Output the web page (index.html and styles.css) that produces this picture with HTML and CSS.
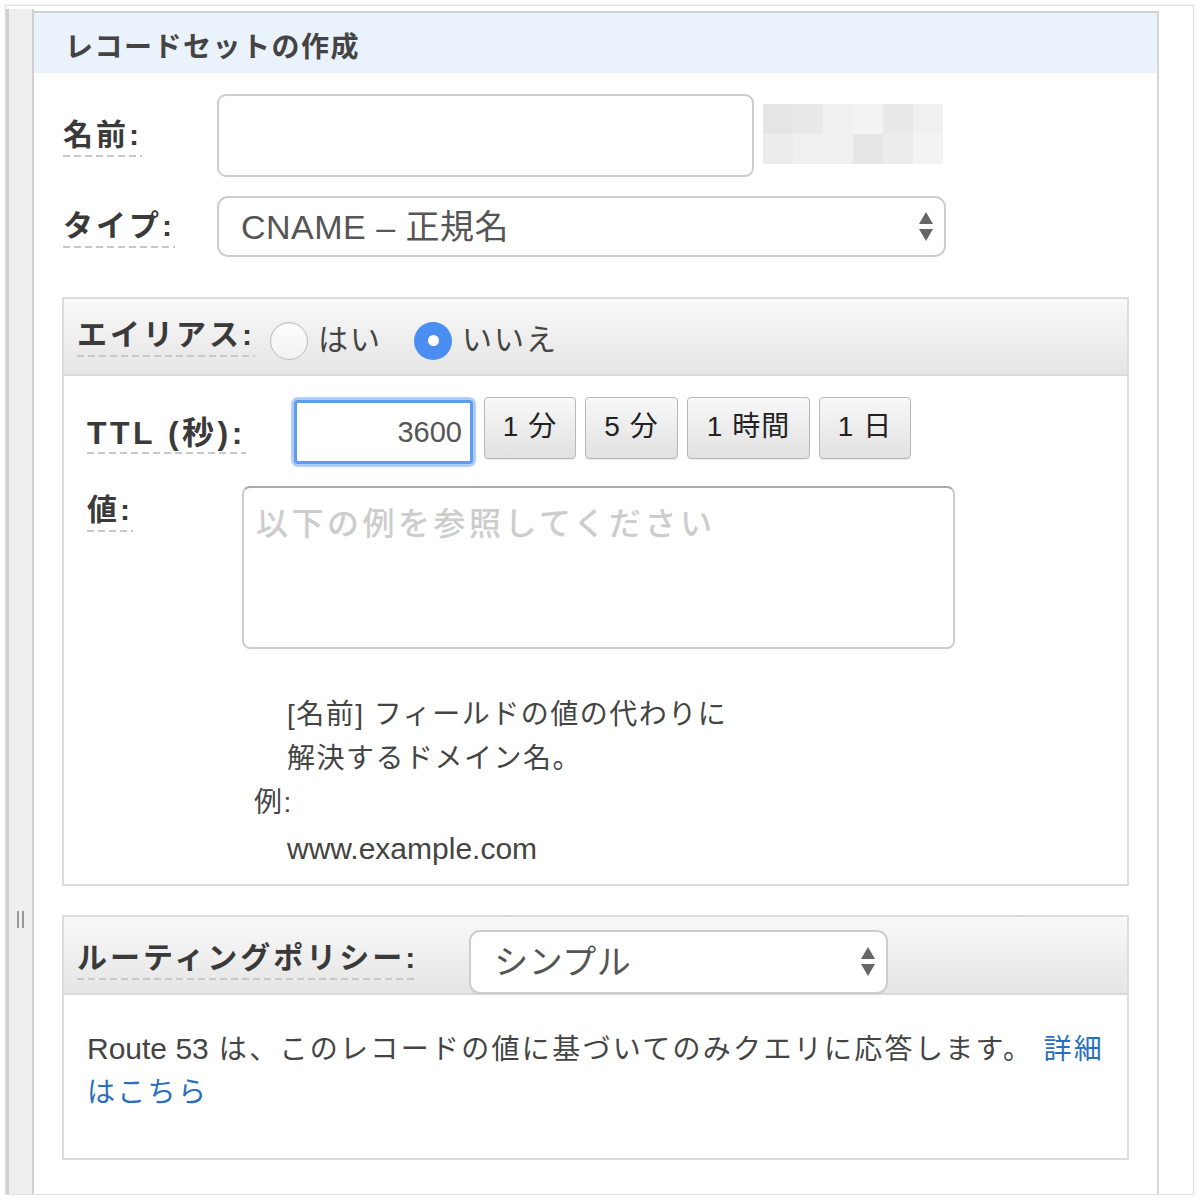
FILE: index.html
```html
<!DOCTYPE html>
<html lang="ja">
<head>
    <meta charset="UTF-8">
    <title>レコードセットの作成</title>
    <link rel="stylesheet" href="styles.css">
</head>
<body>
    <div class="window">
        <div class="gutter">
            <div class="grip"></div>
        </div>

        <div class="panel">
            <div class="panel-header">レコードセットの作成</div>

            <div class="panel-body">
                <div class="field-row">
                    <div class="field-label"><span class="hint">名前:</span></div>
                    <div class="text-input name-input"></div>
                    <div class="mosaic">
                        <i class="m1"></i><i class="m2"></i><i class="m4"></i><i class="m5"></i><i class="m2"></i><i class="m4"></i>
                        <i class="m3"></i><i class="m4"></i><i class="m4"></i><i class="m1"></i><i class="m3"></i><i class="m5"></i>
                    </div>
                </div>

                <div class="field-row type-row">
                    <div class="field-label"><span class="hint">タイプ:</span></div>
                    <div class="select type-select">
                        <span class="select-text">CNAME – 正規名</span>
                        <svg class="arrows" width="16" height="32" viewBox="0 0 16 32">
                            <path d="M8 1 L15 13 L1 13 Z" fill="#666"/>
                            <path d="M1 18 L15 18 L8 30 Z" fill="#666"/>
                        </svg>
                    </div>
                </div>

                <div class="section alias-section">
                    <div class="section-header">
                        <span class="hint">エイリアス:</span>
                        <span class="radio"></span>
                        <span class="radio-text">はい</span>
                        <span class="radio checked"></span>
                        <span class="radio-text">いいえ</span>
                    </div>

                    <div class="section-body">
                        <div class="ttl-row">
                            <div class="ttl-label"><span class="hint">TTL (秒):</span></div>
                            <div class="ttl-input">3600</div>
                            <div class="ttl-buttons">
                                <div class="ttl-btn btn-1m">1 分</div>
                                <div class="ttl-btn btn-5m">5 分</div>
                                <div class="ttl-btn btn-1h">1 時間</div>
                                <div class="ttl-btn btn-1d">1 日</div>
                            </div>
                        </div>

                        <div class="value-row">
                            <div class="value-label"><span class="hint">値:</span></div>
                            <div class="textarea">以下の例を参照してください</div>
                        </div>

                        <div class="help-text">
                            <p class="indent">[名前] フィールドの値の代わりに</p>
                            <p class="indent">解決するドメイン名。</p>
                            <p class="example">例:</p>
                            <p class="indent last"><span class="latin">www.example.com</span></p>
                        </div>
                    </div>
                </div>

                <div class="section routing-section">
                    <div class="section-header routing-header">
                        <span class="hint">ルーティングポリシー:</span>
                        <div class="select routing-select">
                            <span class="select-text">シンプル</span>
                            <svg class="arrows" width="16" height="32" viewBox="0 0 16 32">
                                <path d="M8 1 L15 13 L1 13 Z" fill="#666"/>
                                <path d="M1 18 L15 18 L8 30 Z" fill="#666"/>
                            </svg>
                        </div>
                    </div>
                    <div class="routing-body">
                        <span class="latin">Route 53</span> は、このレコードの値に基づいてのみクエリに応答します。 <a href="#">詳細</a> <a href="#">はこちら</a>
                    </div>
                </div>
            </div>
        </div>
    </div>
</body>
</html>
```

FILE: styles.css
```css
* {
    margin: 0;
    padding: 0;
    box-sizing: border-box;
}

body {
    font-family: "Liberation Sans", "Noto Sans CJK JP", sans-serif;
    background: white;
    color: #444;
}

.window {
    margin: 5px 0 0 5px;
    width: 1189px;
    height: 1190px;
    border: 1px solid #e2e2e2;
    box-shadow: 0 0 2px rgba(0,0,0,0.12);
    display: flex;
    padding-top: 3px;
}

.gutter {
    width: 28px;
    background: #efefef;
    border-left: 3px solid #d0d0d0;
    border-right: 2px solid #cfcfcf;
    display: flex;
    flex-direction: column;
    align-items: center;
}

.grip {
    margin-top: 902px;
    width: 7px;
    height: 17px;
    border-left: 2px solid #999;
    border-right: 2px solid #999;
}

.panel {
    width: 1125px;
    border-top: 2px solid #d0d0d0;
    border-right: 2px solid #d6d6d6;
    margin-top: 2px;
}

.panel-header {
    height: 60px;
    background: #eaf2fc;
    padding: 12px 0 0 31px;
    font-size: 28px;
    font-weight: bold;
    letter-spacing: 1.5px;
    color: #444;
    line-height: 46px;
}

.panel-body {
    padding-left: 29px;
}

/* dashed underline under labels */
.hint {
    display: inline-block;
    font-size: 30px;
    font-weight: bold;
    letter-spacing: 3px;
    color: #3a3a3a;
    line-height: 36px;
    padding-bottom: 4px;
    background-image: repeating-linear-gradient(to right, #c8c8c8 0 7px, transparent 7px 11px);
    background-size: 100% 2px;
    background-repeat: no-repeat;
    background-position: left bottom;
}

.latin {
    font-size: 30px;
    letter-spacing: 0;
}

.field-row {
    display: flex;
    align-items: center;
    margin-top: 21px;
}

.field-label {
    width: 154px;
    padding-top: 2px;
}

.text-input {
    width: 537px;
    height: 83px;
    border: 2px solid #cdcdcd;
    border-radius: 9px;
    background: white;
}

.mosaic {
    margin-left: 9px;
    display: grid;
    grid-template-columns: repeat(6, 30px);
    grid-template-rows: 30px 30px;
    align-self: flex-start;
    margin-top: 10px;
}

.mosaic .m1 { background: #e5e5e5; }
.mosaic .m2 { background: #e9e9e9; }
.mosaic .m3 { background: #ececec; }
.mosaic .m4 { background: #f0f0f0; }
.mosaic .m5 { background: #f3f3f3; }

.type-row {
    margin-top: 19px;
}

.select {
    display: flex;
    align-items: center;
    justify-content: space-between;
    border: 2px solid #cdcdcd;
    border-radius: 11px;
    background: white;
    font-size: 34px;
    letter-spacing: 0.5px;
    color: #555;
}

.select-text {
    margin-top: -5px;
}

.type-select {
    width: 729px;
    height: 61px;
    padding: 0 10px 0 22px;
}

.section {
    margin-left: -1px;
    width: 1067px;
    border: 2px solid #dcdcdc;
}

.alias-section {
    margin-top: 40px;
}

.section-header {
    display: flex;
    align-items: center;
    height: 77px;
    padding-left: 13px;
    background: linear-gradient(#f9f9f9, #e5e5e5);
    border-bottom: 2px solid #dadada;
}

.radio {
    width: 38px;
    height: 38px;
    border-radius: 50%;
    border: 1px solid #bdbdbd;
    background: linear-gradient(#fdfdfd, #f2f2f2);
    margin-top: 8px;
    margin-left: 15px;
    box-shadow: inset 0 1px 1px rgba(0,0,0,0.08);
}

.radio.checked {
    margin-left: 32px;
    border: none;
    background: #4a8ef2;
    display: flex;
    align-items: center;
    justify-content: center;
    box-shadow: none;
}

.radio.checked::after {
    content: "";
    width: 11px;
    height: 11px;
    border-radius: 50%;
    background: white;
}

.radio-text {
    margin-left: 10px;
    font-size: 30px;
    letter-spacing: 2px;
    color: #444;
}

.section-body {
    padding: 21px 0 12px 23px;
}

.ttl-row {
    display: flex;
    align-items: flex-start;
}

.ttl-label {
    width: 204px;
    align-self: center;
    padding-top: 6px;
}

.ttl-label .hint {
    font-size: 32px;
    letter-spacing: 3.5px;
    line-height: 34px;
}

.ttl-input {
    margin: 3px;
    width: 179px;
    height: 64px;
    border: 3px solid #5e9cf0;
    border-radius: 4px;
    box-shadow: 0 0 1px 3px rgba(110, 160, 240, 0.55);
    background: white;
    text-align: right;
    padding-right: 8px;
    font-size: 29px;
    line-height: 58px;
    color: #555;
}

.ttl-buttons {
    display: flex;
    gap: 9px;
    margin-left: 8px;
}

.ttl-btn {
    height: 62px;
    border: 1px solid #b8b8b8;
    border-radius: 4px;
    background: linear-gradient(#f8f8f8, #e1e1e1);
    box-shadow: 0 1px 1px rgba(0,0,0,0.08);
    font-size: 28px;
    letter-spacing: 1px;
    color: #222;
    text-align: center;
    line-height: 58px;
}

.btn-1m { width: 92px; }
.btn-5m { width: 93px; }
.btn-1h { width: 123px; }
.btn-1d { width: 92px; }

.value-row {
    display: flex;
    margin-top: 19px;
}

.value-label {
    width: 155px;
    padding-top: 6px;
}

.textarea {
    width: 713px;
    height: 163px;
    border: 2px solid #cdcdcd;
    border-top-color: #aaa;
    border-radius: 8px;
    padding: 16px 12px;
    font-size: 32px;
    font-weight: 500;
    letter-spacing: 3.5px;
    color: #cdcdcd;
    line-height: 40px;
}

.help-text {
    margin-top: 44px;
    font-size: 28px;
    letter-spacing: 1.5px;
    line-height: 44px;
    color: #444;
}

.help-text .indent {
    padding-left: 200px;
}

.help-text .example {
    padding-left: 167px;
}

.help-text .last {
    margin-top: 2px;
}

.routing-section {
    margin-top: 29px;
}

.routing-header {
    align-items: flex-end;
    height: 78px;
}

.routing-header .hint {
    align-self: center;
    margin-top: 10px;
}

.routing-select {
    margin-left: 51px;
    width: 419px;
    height: 64px;
    margin-bottom: -1px;
    padding: 0 10px 0 23px;
}

.routing-body {
    padding: 32px 10px 44px 23px;
    font-size: 28px;
    letter-spacing: 2.3px;
    line-height: 43px;
    color: #444;
}

.routing-body a {
    color: #2a6fbd;
    text-decoration: none;
}
```
